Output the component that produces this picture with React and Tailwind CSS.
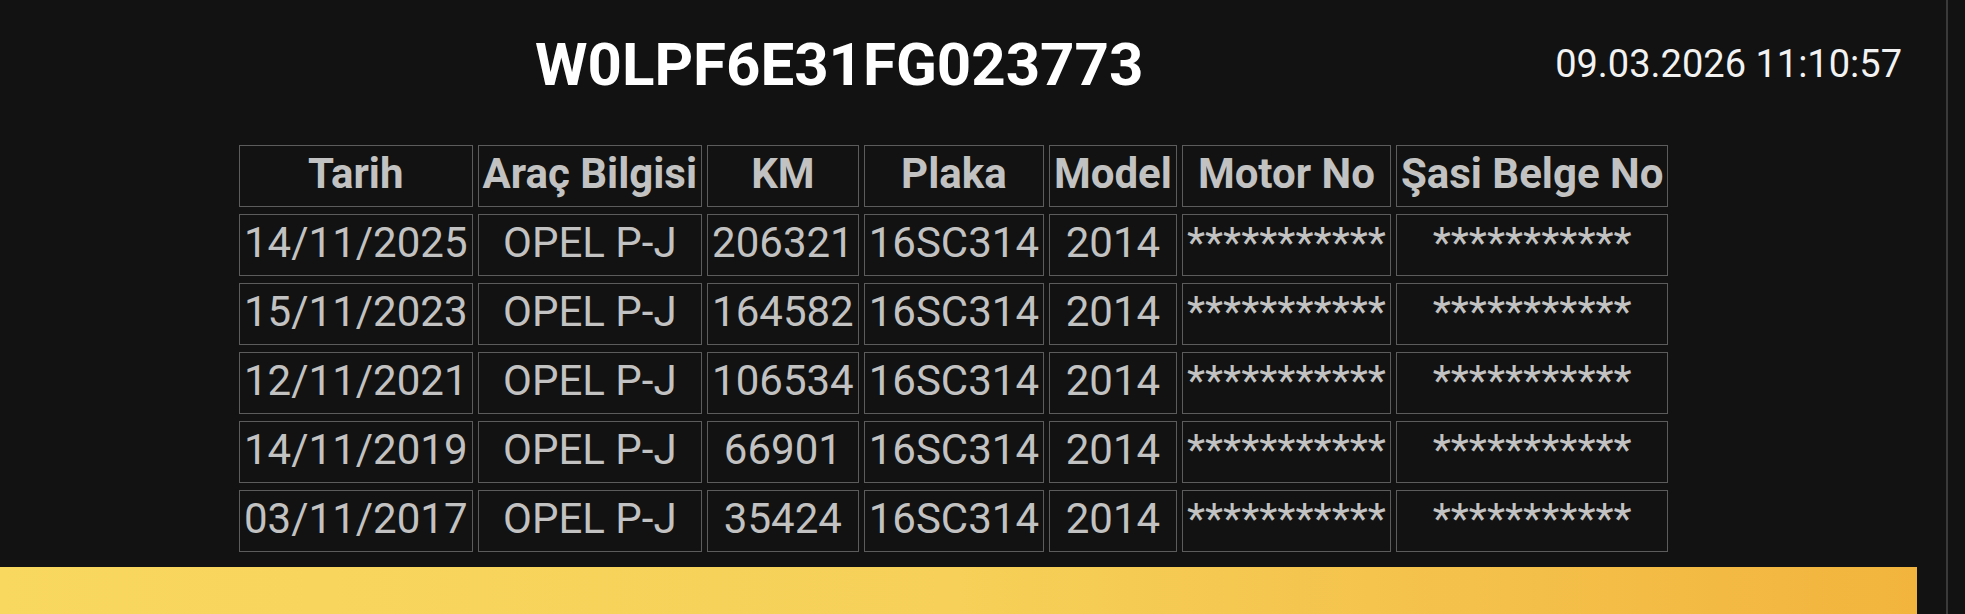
import React from 'react';

const columns = ['Tarih', 'Araç Bilgisi', 'KM', 'Plaka', 'Model', 'Motor No', 'Şasi Belge No'];

const rows = [
  ['14/11/2025', 'OPEL P-J', '206321', '16SC314', '2014', '***********', '***********'],
  ['15/11/2023', 'OPEL P-J', '164582', '16SC314', '2014', '***********', '***********'],
  ['12/11/2021', 'OPEL P-J', '106534', '16SC314', '2014', '***********', '***********'],
  ['14/11/2019', 'OPEL P-J', '66901', '16SC314', '2014', '***********', '***********'],
  ['03/11/2017', 'OPEL P-J', '35424', '16SC314', '2014', '***********', '***********'],
];

// shared cell look: thin grey frame, text sits a little above centre
const cellClass =
  'border border-[#5c5c5c] px-1 pt-[3px] pb-[7px] text-center whitespace-nowrap text-[42px] leading-[50px] text-[#c2c2c2]';

function HistoryTable() {
  return (
    <table className="ml-[234px] mt-[38px] border-separate border-spacing-x-[5px] border-spacing-y-[7px]">
      <thead>
        <tr>
          {columns.map((col) => (
            <th key={col} className={`${cellClass} font-bold`}>
              {col}
            </th>
          ))}
        </tr>
      </thead>
      <tbody>
        {rows.map((row, i) => (
          <tr key={i}>
            {row.map((value, j) => (
              <td key={j} className={`${cellClass} font-normal`}>
                {value}
              </td>
            ))}
          </tr>
        ))}
      </tbody>
    </table>
  );
}

export default function App() {
  return (
    <div className="h-[614px] w-full overflow-hidden bg-[#121212] font-[family-name:Roboto,sans-serif]">
      <div className="h-full w-[1948px] border-r-2 border-[#3a3a3a]">
        <div className="w-[1917px]">
          {/* header: VIN + clock */}
          <div className="flex items-start justify-between pl-[535px] pr-[15px] pt-[30px]">
            <h1 className="text-[60px] leading-[70px] font-bold text-white">W0LPF6E31FG023773</h1>
            <div className="mt-[12px] text-[38px] leading-[44px] text-[#f2f2f2]">09.03.2026 11:10:57</div>
          </div>

          <HistoryTable />

          <div className="mt-[8px] h-[100px] w-full bg-gradient-to-r from-[#f9d85f] via-[#f6d058] to-[#f2b43d]" />
        </div>
      </div>
    </div>
  );
}
